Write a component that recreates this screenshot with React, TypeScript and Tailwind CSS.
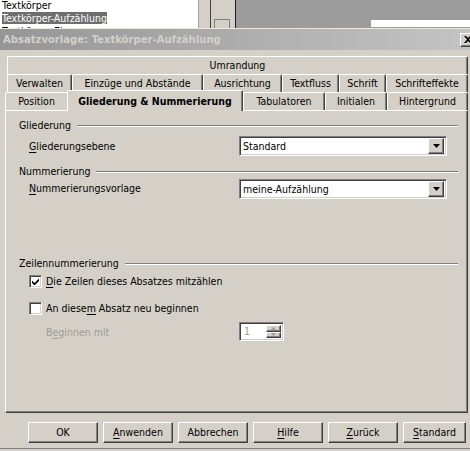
import React from 'react';

// Classic Windows style paragraph style dialog (Absatzvorlage)

const font = "font-['DejaVu_Sans_Condensed','Liberation_Sans',sans-serif]";

const raised =
  'border border-t-white border-l-white border-r-[#404040] border-b-[#404040] shadow-[inset_-1px_-1px_0_#808080]';
const sunken =
  'border border-t-[#808080] border-l-[#808080] border-r-white border-b-white shadow-[inset_1px_1px_0_#404040,inset_-1px_-1px_0_#d4d0c8]';

interface TabProps {
  label: string;
  width: number;
  className?: string;
}

const Tab: React.FC<TabProps> = ({ label, width, className }) => (
  <div
    style={{ width }}
    className={`h-[18px] shrink-0 flex items-center justify-center rounded-t-[2px] border-t border-l border-r border-t-white border-l-white border-r-[#404040] shadow-[inset_-1px_0_0_#808080] ${className ?? ''}`}
  >
    {label}
  </div>
);

const Mnemonic: React.FC<{ text: string; at: number }> = ({ text, at }) => (
  <>
    {text.slice(0, at)}
    <span className="underline underline-offset-2">{text[at]}</span>
    {text.slice(at + 1)}
  </>
);

const Heading: React.FC<{ text: string }> = ({ text }) => (
  <div className="flex items-center h-[13px] ml-[13px] mr-[9px]">
    <span className="pr-[6px]">{text}</span>
    <div className="flex-1 h-[2px] border-t border-t-[#808080] border-b border-b-white" />
  </div>
);

const DropArrow: React.FC = () => (
  <svg width="7" height="4" viewBox="0 0 7 4">
    <path d="M0 0h7L3.5 4z" fill="#000" />
  </svg>
);

const Select: React.FC<{ value: string }> = ({ value }) => (
  <div className={`w-[208px] h-[20px] bg-white flex items-center ${sunken} p-[2px]`}>
    <span className="flex-1 pl-[1px] text-black">{value}</span>
    <div className={`w-[16px] h-[16px] bg-[#d4d0c8] flex items-center justify-center ${raised}`}>
      <DropArrow />
    </div>
  </div>
);

const CheckBox: React.FC<{ checked?: boolean }> = ({ checked }) => (
  <div className={`w-[13px] h-[13px] bg-white flex items-center justify-center ${sunken}`}>
    {checked && (
      <svg width="7" height="7" viewBox="0 0 7 7">
        <path d="M0 2.5l2.5 2.5L7 0.5v2.5L2.5 7.5 0 5z" fill="#000" />
      </svg>
    )}
  </div>
);

const Button: React.FC<{ children: React.ReactNode; width?: number }> = ({ children, width = 70 }) => (
  <div
    style={{ width }}
    className={`h-[21px] shrink-0 bg-[#d4d0c8] flex items-center justify-center ${raised}`}
  >
    {children}
  </div>
);

const App: React.FC = () => {
  return (
    <div className={`w-[470px] h-[451px] overflow-hidden bg-[#d4d0c8] text-[10.5px] leading-[13px] text-black ${font}`}>
      {/* window behind the dialog */}
      <div className="h-[28px] flex bg-[#9c9c9c] overflow-hidden">
        <div className="w-[198px] h-[28px] overflow-hidden bg-white pl-[2px]">
          <div className="-mt-[1px] h-[13px]">Textkörper</div>
          <div className="h-[13px]">
            <span className="bg-[#6e6e6e] text-white">Textkörper-Aufzählung</span>
          </div>
          <div className="h-[3px] overflow-hidden leading-[13px]">Textkörper-Einzug</div>
        </div>
        <div className="w-[1px] bg-[#a0a0a0]" />
        <div className="w-[11px] bg-[#d4d0c8]" />
        <div className="w-[1px] bg-[#404040]" />
        <div className="w-[24px] bg-[#d4d0c8] flex items-end">
          <div className="ml-[3px] w-[16px] h-[9px] border border-b-0 border-[#808080]" />
        </div>
        <div className="w-[1px] bg-[#202020]" />
        <div className="flex-1 flex flex-col">
          <div className="h-[20px]" />
          <div className="h-[7px] ml-[135px] bg-white" />
        </div>
      </div>
      <div className="h-[1px] bg-[#ece9d8]" />

      {/* title bar */}
      <div className="h-[21px] flex items-center bg-gradient-to-r from-[#969696] to-[#c4c4c4]">
        <span className="pl-[3px] flex-1 font-bold text-[11px] text-[#d4d0c8] tracking-[0.1px]">
          Absatzvorlage: Textkörper-Aufzählung
        </span>
        <div className={`w-[16px] h-[14px] mr-[-6px] bg-[#d4d0c8] flex items-center justify-center ${raised}`}>
          <svg width="8" height="7" viewBox="0 0 8 7">
            <path d="M0 0h2l2 2 2-2h2L5 3.5 8 7H6L4 5 2 7H0l3-3.5z" fill="#000" />
          </svg>
        </div>
      </div>

      {/* tab rows */}
      <div className="pt-[6px]">
        <div className="ml-[7px] flex">
          <Tab label="Umrandung" width={461} />
        </div>
        <div className="ml-[7px] flex">
          <Tab label="Verwalten" width={65} />
          <Tab label="Einzüge und Abstände" width={131} />
          <Tab label="Ausrichtung" width={79} />
          <Tab label="Textfluss" width={57} />
          <Tab label="Schrift" width={47} />
          <Tab label="Schrifteffekte" width={82} />
        </div>
        <div className="ml-[5px] flex items-end h-[18px] relative z-10">
          <Tab label="Position" width={62} className="border-r-0 shadow-none" />
          <div className="w-[176px] h-[21px] shrink-0 mb-[-1px] bg-[#d4d0c8] flex items-center justify-center font-bold rounded-t-[2px] border-t border-l border-r border-t-white border-l-white border-r-[#404040] shadow-[inset_-1px_0_0_#808080]">
            Gliederung &amp; Nummerierung
          </div>
          <Tab label="Tabulatoren" width={82} />
          <Tab label="Initialen" width={62} />
          <Tab label="Hintergrund" width={81} />
        </div>

        {/* tab page */}
        <div className={`ml-[5px] w-[463px] h-[303px] flex flex-col ${raised}`}>
          <div className="mt-[8px]">
            <Heading text="Gliederung" />
          </div>
          <div className="mt-[4px] flex items-center">
            <span className="ml-[23px] w-[210px]">
              <Mnemonic text="Gliederungsebene" at={0} />
            </span>
            <Select value="Standard" />
          </div>
          <div className="mt-[9px]">
            <Heading text="Nummerierung" />
          </div>
          <div className="mt-[1px] flex items-center">
            <span className="ml-[23px] w-[210px] -mt-[2px]">
              <Mnemonic text="Nummerierungsvorlage" at={0} />
            </span>
            <Select value="meine-Aufzählung" />
          </div>

          <div className="mt-[58px]">
            <Heading text="Zeilennummerierung" />
          </div>
          <div className="mt-[5px] flex items-center ml-[23px] gap-[4px]">
            <CheckBox checked />
            <span>
              <Mnemonic text="Die Zeilen dieses Absatzes mitzählen" at={0} />
            </span>
          </div>
          <div className="mt-[14px] flex items-center ml-[23px] gap-[4px]">
            <CheckBox />
            <span>
              <Mnemonic text="An diesem Absatz neu beginnen" at={8} />
            </span>
          </div>
          <div className="mt-[7px] flex items-center">
            <span className="ml-[40px] w-[193px] mt-[2px] text-[#a09c94]">
              <Mnemonic text="Beginnen mit" at={1} />
            </span>
            <div className={`w-[45px] h-[19px] flex ${sunken} p-[2px] bg-white`}>
              <span className="flex-1 pl-[2px] text-[#a09c94]">1</span>
              <div className="w-[15px] flex flex-col">
                <div className={`flex-1 bg-[#d4d0c8] flex items-center justify-center ${raised}`}>
                  <svg width="5" height="3" viewBox="0 0 5 3">
                    <path d="M0 3h5L2.5 0z" fill="#a09c94" />
                  </svg>
                </div>
                <div className={`flex-1 bg-[#d4d0c8] flex items-center justify-center ${raised}`}>
                  <svg width="5" height="3" viewBox="0 0 5 3">
                    <path d="M0 0h5L2.5 3z" fill="#a09c94" />
                  </svg>
                </div>
              </div>
            </div>
          </div>
        </div>

        {/* buttons */}
        <div className="mt-[9px] ml-[28px] flex gap-[5px]">
          <Button>OK</Button>
          <Button>
            <Mnemonic text="Anwenden" at={0} />
          </Button>
          <Button>Abbrechen</Button>
          <Button>
            <Mnemonic text="Hilfe" at={0} />
          </Button>
          <Button>
            <Mnemonic text="Zurück" at={0} />
          </Button>
          <Button width={63}>
            <Mnemonic text="Standard" at={0} />
          </Button>
        </div>
        <div className="mt-[5px] h-[1px] bg-[#808080]" />
      </div>
    </div>
  );
};

export default App;
